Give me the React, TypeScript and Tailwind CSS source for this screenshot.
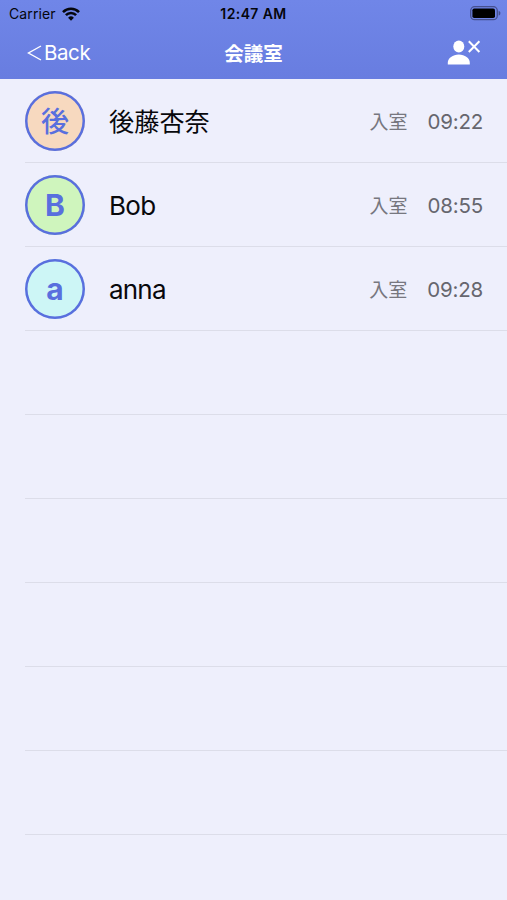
type Member = {
  initial: string
  name: string
  time: string
  avatarClass: string
  nameClass: string
}

const members: Member[] = [
  { initial: '後', name: '後藤杏奈', time: '09:22', avatarClass: 'bg-[#f7d9bf] pt-[3px] text-[28px] font-medium', nameClass: 'pt-1 text-[25.2px]' },
  { initial: 'B', name: 'Bob', time: '08:55', avatarClass: 'bg-[#cff5bd] text-[30px] font-bold', nameClass: 'pt-0.5 text-[26px] tracking-[-0.7px]' },
  { initial: 'a', name: 'anna', time: '09:28', avatarClass: 'bg-[#cdf6f6] text-[30px] font-bold', nameClass: 'pt-0.5 text-[26px] tracking-[-0.8px]' },
]

const emptyRows = [0, 1, 2, 3, 4, 5]

function WifiIcon() {
  return (
    <svg width="18" height="14" viewBox="0 0 18 14" fill="none" stroke="#05060c" strokeWidth="2.6">
      <path d="M1 5.1a11.4 11.4 0 0 1 16 0" />
      <path d="M3.9 8.1a7.2 7.2 0 0 1 10.2 0" />
      <path d="M9 13.7 6.1 10.7a4.1 4.1 0 0 1 5.8 0Z" fill="#05060c" stroke="none" />
    </svg>
  )
}

function BatteryIcon() {
  return (
    <svg width="31" height="15" viewBox="0 0 31 15">
      <rect x="0.7" y="0.7" width="26.6" height="13" rx="4" fill="none" stroke="#46508f" strokeWidth="1.3" />
      <rect x="2.4" y="2.4" width="22.6" height="9.6" rx="1.8" fill="#000" />
      <path d="M28.6 4.8c1.2.4 1.8 1.3 1.8 2.4s-.6 2-1.8 2.4Z" fill="#46508f" />
    </svg>
  )
}

function LeaveIcon() {
  return (
    <svg width="34" height="26" viewBox="0 0 34 26">
      <ellipse cx="11.8" cy="6.6" rx="5.5" ry="6" fill="#fff" />
      <path d="M.8 24.4v-1.6c0-4.6 5-8.2 11-8.2s11 3.6 11 8.2v1.6Z" fill="#fff" />
      <path d="m21.8 1.2 10.6 10.8m0-10.8L21.8 12" stroke="#fff" strokeWidth="2" />
    </svg>
  )
}

export default function App() {
  return (
    <div className="h-[900px] w-[507px] overflow-hidden bg-[#eeeffc] font-['Inter','Noto_Sans_CJK_JP',sans-serif]">
      {/* Status bar and navigation */}
      <header className="h-[79px] bg-gradient-to-b from-[#7086e8] to-[#687de0]">
        <div className="grid h-[27px] grid-cols-3 items-center pl-[9px] pr-[6px] text-[#05060c]">
          <div className="flex items-center gap-[6px]">
            <span className="text-[14px] leading-none tracking-[0.1px]">Carrier</span>
            <WifiIcon />
          </div>
          <span className="pr-[3px] text-center text-[14px] font-semibold leading-none tracking-[0.4px]">12:47 AM</span>
          <div className="flex justify-end">
            <BatteryIcon />
          </div>
        </div>
        <div className="grid h-[52px] grid-cols-3 items-center pl-[27px] pr-[26px] text-white">
          <button className="flex items-center gap-[2px] text-left">
            <svg width="15" height="16" viewBox="0 0 15 16" fill="none" stroke="#fff" strokeWidth="1.4">
              <path d="M14 1 1.5 8 14 15" />
            </svg>
            <span className="text-[20.5px] leading-none tracking-[-0.4px]">Back</span>
          </button>
          <h1 className="pr-px pt-[3px] text-center text-[19.5px] font-bold leading-none">会議室</h1>
          <button className="flex justify-end">
            <LeaveIcon />
          </button>
        </div>
      </header>

      {/* Members in the room */}
      <ul className="pl-[25px]">
        {members.map((member) => (
          <li key={member.name} className="flex h-[84px] items-center border-b border-[#dcdde9] pr-[24px]">
            <div className={`flex size-[60px] items-center justify-center rounded-full leading-none text-[#596fde] inset-ring-[2.5px] inset-ring-[#596fde] ${member.avatarClass}`}>
              {member.initial}
            </div>
            <span className={`ml-6 leading-none text-[#08080c] ${member.nameClass}`}>{member.name}</span>
            <div className="ml-auto flex items-center gap-5 pt-1 leading-none text-[#66666e]">
              <span className="text-[19px] text-[#77777f]">入室</span>
              <span className="text-[20.5px] tracking-[-0.2px]">{member.time}</span>
            </div>
          </li>
        ))}
        {emptyRows.map((row) => (
          <li key={row} className="h-[84px] border-b border-[#dcdde9]" />
        ))}
      </ul>
    </div>
  )
}
